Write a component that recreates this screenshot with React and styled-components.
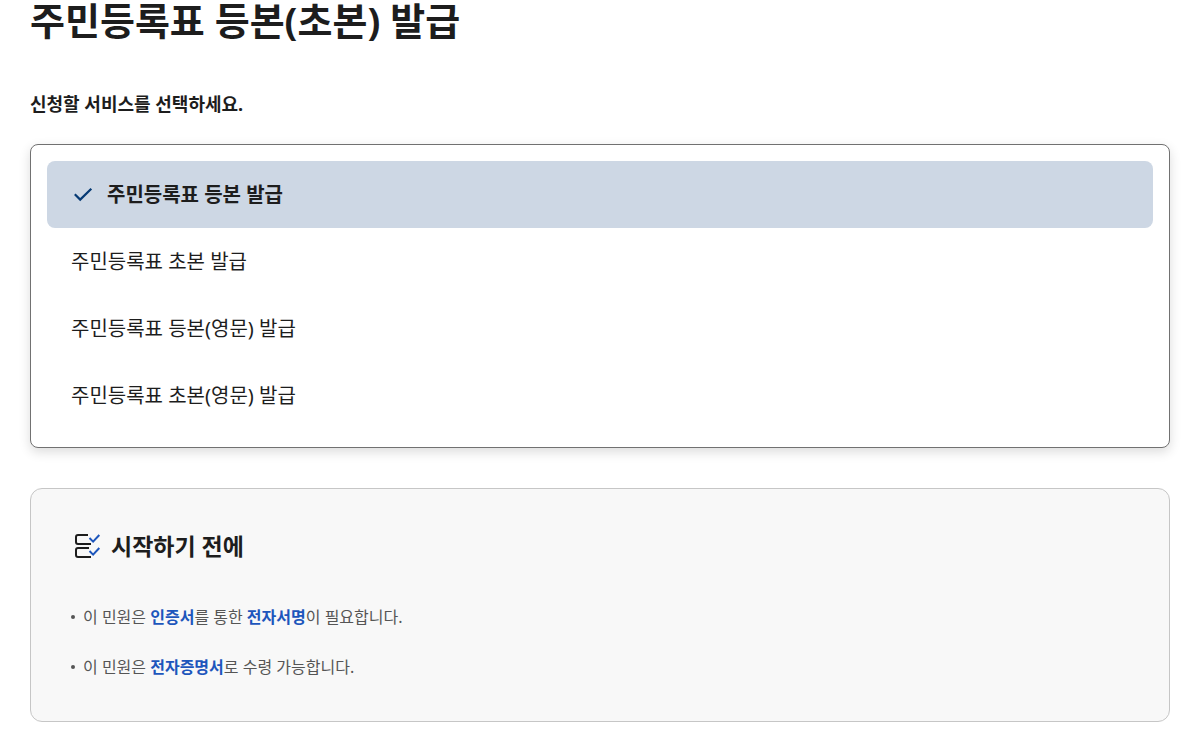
import React, { useState } from "react";
import styled, { createGlobalStyle } from "styled-components";

const GlobalStyle = createGlobalStyle`
  * { box-sizing: border-box; }
  body {
    margin: 0;
    background: #fff;
    color: #1d1d1d;
    font-family: "Noto Sans", "Noto Sans CJK KR", sans-serif;
    word-break: keep-all;
  }
`;

const Page = styled.main`
  padding: 0 14px 20px 30px;
`;

const Title = styled.h1`
  margin: 0;
  padding-bottom: 46px;
  font-size: 38px;
  line-height: 40px;
  font-weight: 700;
`;

const Services = styled.fieldset`
  margin: 0;
  padding: 0;
  border: 0;
  min-width: 0;
`;

const Prompt = styled.legend`
  padding: 0 0 22px;
  font-size: 18px;
  line-height: 36px;
  font-weight: 700;
`;

const OptionPanel = styled.div`
  padding: 16px 16px 18px;
  border: 1px solid #717171;
  border-radius: 8px;
  background: #fff;
  box-shadow: 0 4px 12px rgba(0, 0, 0, 0.14);
`;

const Option = styled.label`
  display: flex;
  align-items: center;
  gap: 12px;
  padding: 18px 24px;
  border-radius: 8px;
  font-size: 20px;
  line-height: 31px;
  font-weight: ${(p) => (p.$selected ? 700 : 400)};
  background: ${(p) => (p.$selected ? "#cdd7e4" : "transparent")};
  cursor: pointer;
`;

const Radio = styled.input`
  position: absolute;
  opacity: 0;
`;

const Notice = styled.section`
  margin-top: 40px;
  padding: 40px;
  border: 1px solid #c6c6c6;
  border-radius: 12px;
  background: #f8f8f8;
`;

const NoticeTitle = styled.h2`
  display: flex;
  align-items: center;
  gap: 8px;
  margin: 0 0 40px;
  font-size: 23px;
  line-height: 34px;
  font-weight: 700;
`;

const NoticeList = styled.ul`
  display: grid;
  gap: 22px;
  margin: 0;
  padding: 0;
  list-style: none;
`;

const NoticeItem = styled.li`
  display: flex;
  align-items: center;
  gap: 8px;
  font-size: 16px;
  line-height: 28px;
  color: #555;
  &::before {
    content: "";
    width: 4px;
    height: 4px;
    border-radius: 50%;
    background: #555;
  }
`;

const Key = styled.strong`
  color: #1d56bc;
  font-weight: 700;
`;

const CheckIcon = () => (
  <svg width="24" height="24" viewBox="0 0 24 24" fill="none" aria-hidden="true">
    <path d="M3.8 11.2l5.4 5.4L20.3 5.7" stroke="#063a74" strokeWidth="2.2" />
  </svg>
);

const ChecklistIcon = () => (
  <svg width="32" height="32" viewBox="0 0 32 32" fill="none" aria-hidden="true">
    <path d="M17 5H7a2 2 0 0 0-2 2v5a2 2 0 0 0 2 2h13M18 18H7a2 2 0 0 0-2 2v5a2 2 0 0 0 2 2h13" stroke="#1d1d1d" strokeWidth="2" />
    <path d="M18.500 8l3.600 3.600L28.300 5M18.500 21l3.600 3.600L28.300 18" stroke="#1d56bc" strokeWidth="2" />
  </svg>
);

const services = [
  "주민등록표 등본 발급",
  "주민등록표 초본 발급",
  "주민등록표 등본(영문) 발급",
  "주민등록표 초본(영문) 발급",
];

export default function App() {
  const [selected, setSelected] = useState(0);
  return (
    <Page>
      <GlobalStyle />
      <Title>주민등록표 등본(초본) 발급</Title>
      <Services>
        <Prompt>신청할 서비스를 선택하세요.</Prompt>
        <OptionPanel>
          {services.map((name, i) => (
            <Option key={name} $selected={i === selected}>
              <Radio type="radio" name="service" checked={i === selected} onChange={() => setSelected(i)} />
              {i === selected && <CheckIcon />}
              {name}
            </Option>
          ))}
        </OptionPanel>
      </Services>
      <Notice>
        <NoticeTitle><ChecklistIcon />시작하기 전에</NoticeTitle>
        <NoticeList>
          <NoticeItem><span>이 민원은 <Key>인증서</Key>를 통한 <Key>전자서명</Key>이 필요합니다.</span></NoticeItem>
          <NoticeItem><span>이 민원은 <Key>전자증명서</Key>로 수령 가능합니다.</span></NoticeItem>
        </NoticeList>
      </Notice>
    </Page>
  );
}
